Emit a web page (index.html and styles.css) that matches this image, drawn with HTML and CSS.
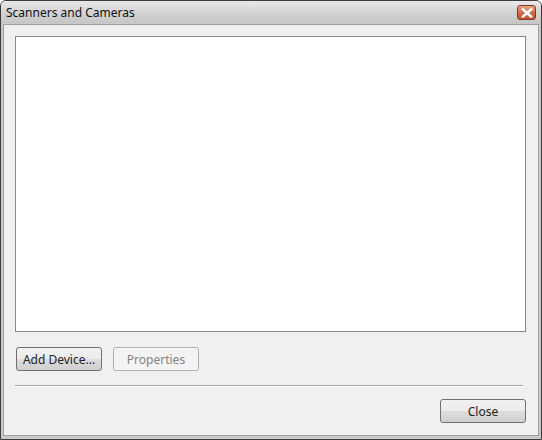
FILE: index.html
```html
<!DOCTYPE html>
<html>
<head><meta charset="utf-8"><link rel="stylesheet" href="styles.css"></head>
<body>
<div class="window">
  <div class="titlebar">
    <span class="title">Scanners and Cameras</span>
    <div class="closebtn"><svg width="12" height="10" viewBox="0 0 12 10"><path d="M2 1.5 L10 8.5 M10 1.5 L2 8.5" stroke="#fff" stroke-width="2.6" stroke-linecap="square"/></svg></div>
  </div>
  <div class="client">
    <div class="listbox"></div>
    <div class="btnrow">
      <button class="btn">Add Device...</button>
      <button class="btn disabled">Properties</button>
    </div>
    <div class="sep"></div>
    <div class="footer">
      <button class="btn">Close</button>
    </div>
  </div>
</div>
</body>
</html>
```
FILE: styles.css
```css
html, body { margin: 0; padding: 0; background: #fff; }
.window {
  width: 542px; height: 440px; box-sizing: border-box;
  border: 1px solid #3c3c3c; border-radius: 6px 6px 0 0;
  background: #c9c9c9;
  display: flex; flex-direction: column;
  font-family: "Segoe UI", "Noto Sans", "DejaVu Sans", sans-serif;
  font-size: 12px;
}
.titlebar {
  height: 22px; flex: none;
  display: flex; align-items: center; justify-content: space-between;
  padding: 0 5px 0 5px;
  background: linear-gradient(#e9e9e9, #d4d4d4 50%, #c6c6c6);
  border-radius: 5px 5px 0 0;
}
.title { color: #111; font-size: 12px; }
.closebtn {
  width: 19px; height: 15px; box-sizing: border-box; margin-top: 1px;
  border: 1px solid #7a3a25; border-radius: 3px;
  background: linear-gradient(#e9a48c, #d26a48 50%, #c9502c);
  display: flex; align-items: center; justify-content: center;
}
.client {
  flex: 1; margin: 1px 2px 3px 2px;
  background: #f0f0f0; border: 1px solid #a0a0a0;
  display: flex; flex-direction: column;
  padding: 11px 12px 0 11px;
}
.listbox {
  height: 296px; box-sizing: border-box; border: 1px solid #828790; background: #fff; flex: none;
}
.btnrow { display: flex; gap: 11px; margin-top: 15px; padding-left: 1px; }
.btn {
  width: 86px; height: 24px; font-family: inherit; font-size: 12px; color: #222;
  border: 1px solid #707070; border-radius: 3px;
  background: linear-gradient(#f2f2f2, #ebebeb 50%, #dddddd 51%, #cfcfcf);
  padding: 0;
}
.btn.disabled { border-color: #adb2b5; background: #f4f4f4; color: #838383; }
.sep { height: 1px; background: #a0a0a0; border-bottom: 1px solid #fff; margin: 14px 3px 0 0; }
.footer { display: flex; justify-content: flex-end; margin-top: 12px; }
```
